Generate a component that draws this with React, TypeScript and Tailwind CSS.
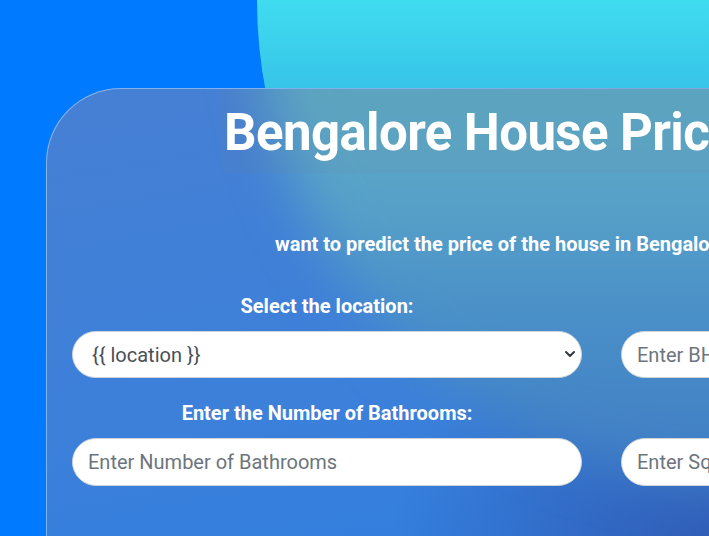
import { ChevronDown } from 'lucide-react'

const field =
  'w-full rounded-full bg-white border border-[#ced4da] px-[15px] text-[20px] text-[#495057] placeholder:text-[#6c757d] outline-none'

function Label({ children }: { children: string }) {
  return <label className="block text-center text-[20px] font-bold leading-[24px] text-white">{children}</label>
}

export default function App() {
  return (
    <div className="relative h-[536px] w-full overflow-hidden bg-[#007bff] font-['Roboto',sans-serif]">
      {/* cyan circle behind the card */}
      <div className="absolute left-[257px] top-[-484px] h-[968px] w-[968px] rounded-full bg-[linear-gradient(180deg,#40dcf0_50%,#36c2e8_60%)]" />

      {/* glass card */}
      <div className="relative ml-[46px] mt-[88px] min-h-[600px] w-[1111px] overflow-hidden rounded-tl-[75px] border-l border-t border-white/40 bg-[radial-gradient(ellipse_360px_300px_at_700px_480px,#3158b0_0%,rgba(49,88,176,0)_100%),linear-gradient(170deg,#4680d4_0%,#3c80da_45%,#2a7de2_85%)] px-[25px]">
        {/* blurred circle seen through the glass */}
        <div className="pointer-events-none absolute left-[211px] top-[-572px] h-[968px] w-[968px] rounded-full bg-[linear-gradient(180deg,#5cacc4_50%,#58a2c8_70%,#4a90c8_82%,#3f7cc4_100%)] blur-[26px]" />

        <div className="relative">
          <h1 className="ml-[150px] h-[84px] w-fit bg-[rgba(128,128,128,0.08)] pl-[2px] pr-[24px] pt-[4px] text-[51px] font-bold leading-[80px] tracking-[-0.6px] text-white">
            Bengalore House Price Predictor
          </h1>

          <p className="ml-[203px] mt-[59px] whitespace-nowrap text-[20px] font-bold leading-[24px] text-white">
            want to predict the price of the house in Bengalore? Fill in the details below
          </p>

          <div className="mt-[38px] grid grid-cols-[510px_510px] gap-x-[39px]">
            <div>
              <Label>Select the location:</Label>
              <div className="relative mt-[13px]">
                <select className={`${field} h-[47px] appearance-none pl-[19px]`} defaultValue="loc">
                  <option value="loc">{'{{ location }}'}</option>
                </select>
                <ChevronDown
                  className="pointer-events-none absolute right-[4px] top-[15px] h-[16px] w-[16px] text-[#343a40]"
                  strokeWidth={3}
                />
              </div>
            </div>
            <div>
              <Label>Enter BHK:</Label>
              <input className={`${field} mt-[13px] h-[47px]`} placeholder="Enter BHK" />
            </div>

            <div className="mt-[23px]">
              <Label>Enter the Number of Bathrooms:</Label>
              <input className={`${field} mt-[13px] h-[48px]`} placeholder="Enter Number of Bathrooms" />
            </div>
            <div className="mt-[23px]">
              <Label>Enter the Square Feet area:</Label>
              <input className={`${field} mt-[13px] h-[48px]`} placeholder="Enter Square Feet area" />
            </div>
          </div>
        </div>
      </div>
    </div>
  )
}
